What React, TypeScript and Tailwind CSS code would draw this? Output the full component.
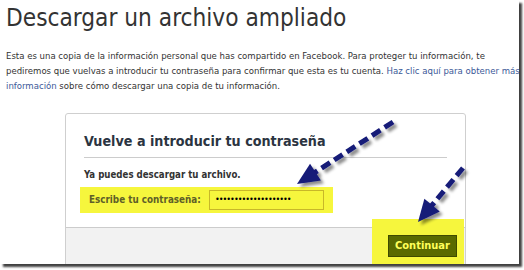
import type { ReactNode } from "react";

const font = { fontFamily: '"DejaVu Sans Condensed", "DejaVu Sans", Tahoma, sans-serif' };

function Arrow({ from, to }: { from: [number, number]; to: [number, number] }) {
  const dx = to[0] - from[0];
  const dy = to[1] - from[1];
  const len = Math.hypot(dx, dy);
  const ux = dx / len;
  const uy = dy / len;
  const bx = to[0] - ux * 22;
  const by = to[1] - uy * 22;
  const px = -uy * 10;
  const py = ux * 10;
  return (
    <g filter="url(#shade)">
      <line x1={from[0]} y1={from[1]} x2={bx + ux * 2} y2={by + uy * 2} stroke="#141a78" strokeWidth={5} strokeDasharray="10 5" />
      <polygon points={`${to[0]},${to[1]} ${bx + px},${by + py} ${bx - px},${by - py}`} fill="#141a78" />
    </g>
  );
}

function Link({ children }: { children: ReactNode }) {
  return <span className="text-[#3b5998]">{children}</span>;
}

export default function App() {
  return (
    <div className="w-[524px] h-[270px] bg-white overflow-hidden">
      <div className="relative w-[519px] h-[264px] bg-white shadow-[3px_3px_2px_rgba(0,0,0,0.75)] overflow-hidden" style={font}>
        <h1 className="pl-[6px] pt-[3px] text-[24.2px] leading-[30px] text-[#333]">Descargar un archivo ampliado</h1>

        <p className="mt-[15px] px-[6px] text-[9.5px] leading-[15px] text-[#333] whitespace-nowrap">
          Esta es una copia de la información personal que has compartido en Facebook. Para proteger tu información, te
          <br />
          pediremos que vuelvas a introducir tu contraseña para confirmar que esta es tu cuenta. <Link>Haz clic aquí para obtener más</Link>
          <br />
          <Link>información</Link> sobre cómo descargar una copia de tu información.
        </p>

        <div className="ml-[65px] mt-[20px] w-[401px] h-[170px] rounded-[3px] border border-[#cfcfcf] bg-white">
          <div className="px-[18px] pt-[18px]">
            <h2 className="pb-[7px] text-[14.2px] leading-[18px] font-bold text-[#2b3441] border-b border-[#cccccc]">
              Vuelve a introducir tu contraseña
            </h2>
            <div className="pt-[10px] text-[9.6px] leading-[14px] font-bold text-[#333]">Ya puedes descargar tu archivo.</div>
          </div>
          <div className="ml-[14px] mt-[5px] flex h-[26px] w-[253px] items-center justify-between bg-[#f6f63d] pl-[9px] pr-[9px]">
            <span className="text-[9.8px] font-bold text-[#5f5f28]">Escribe tu contraseña:</span>
            <div className="flex h-[20px] w-[115px] items-center border border-[#c8b828] pl-[5px] text-[9px] tracking-[-1px] text-black">
              ••••••••••••••••••••
            </div>
          </div>
          <div className="mt-[14px] flex h-[60px] justify-end border-t border-[#cccccc] bg-[#f2f2f2] pr-[1px]">
            <div className="-mt-[9px] h-[48px] bg-[#f6f63d] pl-[16px] pr-[7px] pt-[16px]">
              <div className="flex h-[22px] w-[69px] items-center justify-center border border-[#3f4a00] bg-[#5a6a00] text-[11px] font-bold text-[#ffff5a]">
                Continuar
              </div>
            </div>
          </div>
        </div>

        <svg className="absolute left-0 top-0" width={519} height={264}>
          <defs>
            <filter id="shade" x="-20%" y="-20%" width="140%" height="140%">
              <feDropShadow dx={3} dy={3} stdDeviation={1.5} floodColor="#000" floodOpacity={0.45} />
            </filter>
          </defs>
          <Arrow from={[393, 122]} to={[297, 184]} />
          <Arrow from={[463, 168]} to={[418, 222]} />
        </svg>
      </div>
    </div>
  );
}
